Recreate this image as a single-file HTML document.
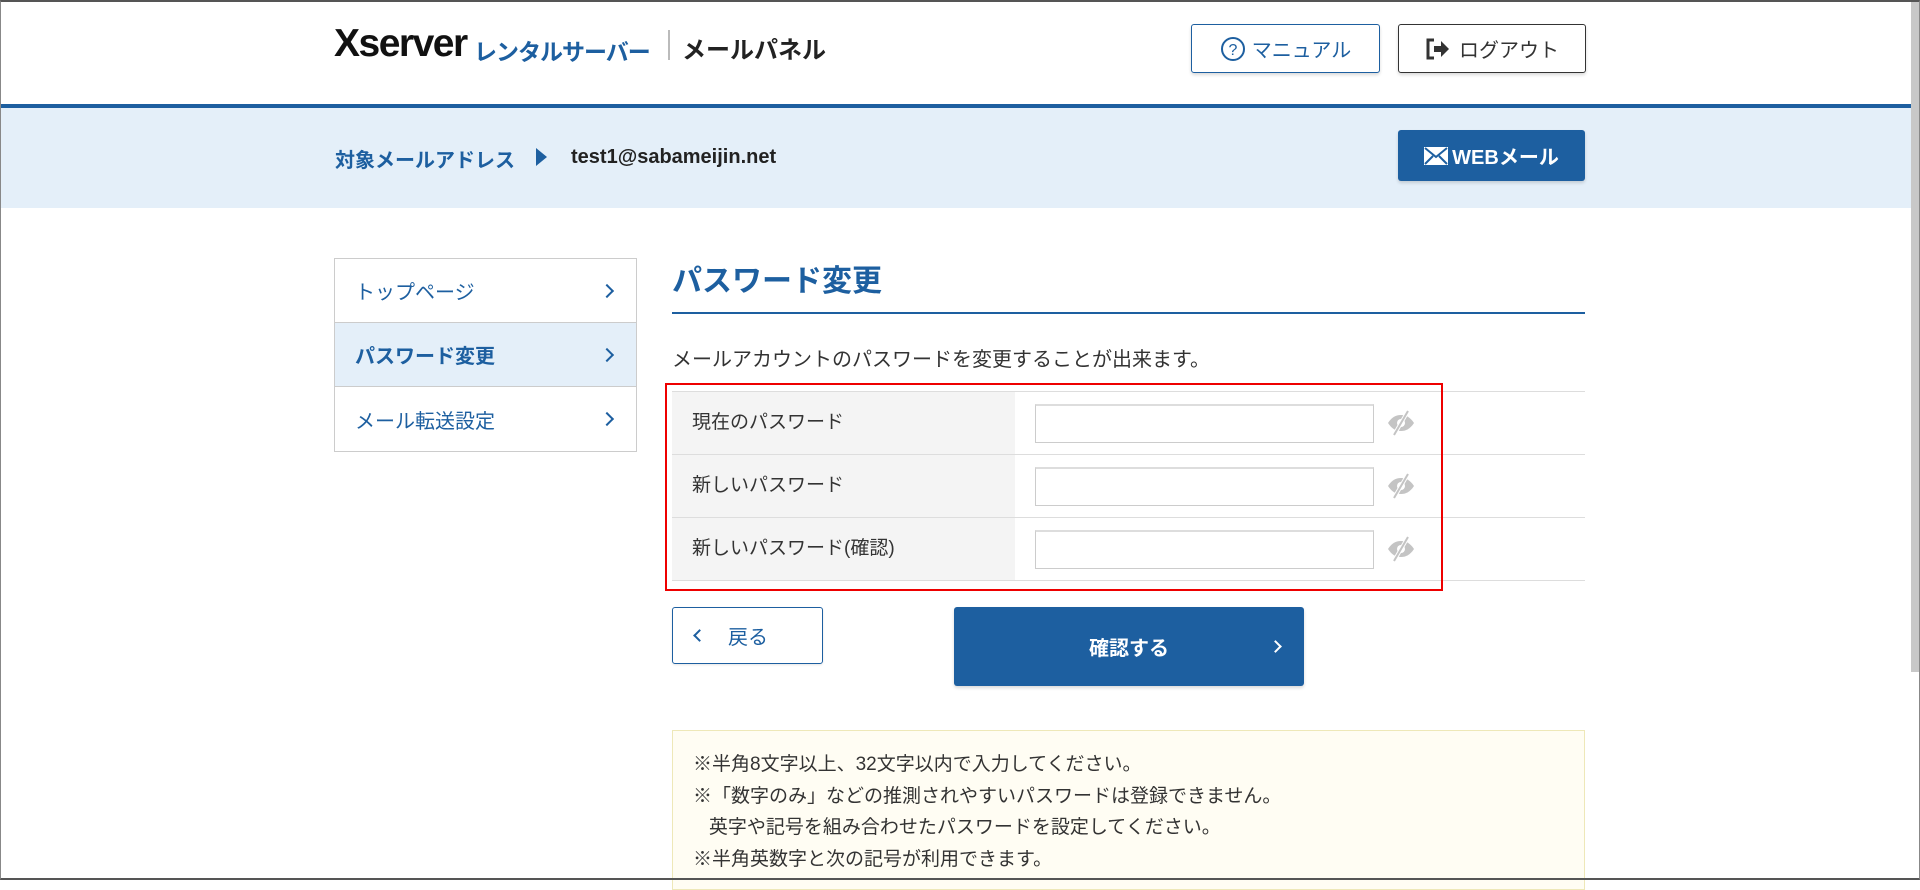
<!DOCTYPE html>
<html><head><meta charset="utf-8"><style>
*{box-sizing:border-box;margin:0;padding:0}
body{width:1920px;height:880px;overflow:hidden;background:#fff;font-family:"Liberation Sans","Noto Sans CJK JP",sans-serif;color:#333;position:relative}
.abs{position:absolute}
.frame{position:absolute;left:0;top:0;width:1920px;height:880px;border:1px solid #888;border-top:2px solid #555;border-bottom:2px solid #555;pointer-events:none;z-index:10}
.scroll{position:absolute;right:1px;top:2px;width:8px;height:670px;background:#c8c8c8;z-index:9}
.btn{position:absolute;border-radius:3px;display:flex;align-items:center;justify-content:center;font-size:20px;box-shadow:0 2px 3px rgba(0,0,0,.15)}
.nav{position:absolute;left:334px;top:258px;width:303px;border:1px solid #ccc}
.nav div{height:64px;border-bottom:1px solid #ccc;display:flex;align-items:center;padding-left:20px;font-size:20px;color:#1d5fa0;position:relative}
.nav div:last-child{border-bottom:none}
.nav div::after{content:"";position:absolute;right:24px;top:27px;width:8px;height:8px;border-top:2px solid #1d5fa0;border-right:2px solid #1d5fa0;transform:rotate(45deg)}
.row{position:absolute;left:672px;width:913px;height:63px;border-bottom:1px solid #ddd}
.row .lab{position:absolute;left:0;top:0;width:343px;height:62px;background:#f4f4f4;font-size:19px;padding-left:20px;line-height:62px;color:#333}
.row .inp{position:absolute;left:363px;top:12px;width:339px;height:39px;border:1px solid #ccc;border-top:2px solid #ddd;background:#fff}
.row svg{position:absolute;left:714px;top:16px}
.note{position:absolute;left:672px;top:730px;width:913px;height:160px;background:#fffdf3;border:1px solid #eee8b8;font-size:19px;color:#333;padding:18px 0 0 20px;line-height:31.5px}
</style></head><body>
<div class="frame"></div><div class="scroll"></div>
<div class="abs" style="left:334px;top:22px;font-size:39px;font-weight:bold;letter-spacing:-1.5px;color:#111">Xserver</div>
<div class="abs" style="left:474px;top:33px;font-size:23px;font-weight:bold;color:#1d5fa0;letter-spacing:-1px">レンタルサーバー</div>
<div class="abs" style="left:668px;top:30px;width:2px;height:30px;background:#bbb"></div>
<div class="abs" style="left:682px;top:30px;font-size:24px;font-weight:bold;color:#222">メールパネル</div>
<div class="btn" style="left:1191px;top:24px;width:189px;height:49px;border:1px solid #1d5fa0;color:#1d5fa0"><svg width="26" height="26" viewBox="0 0 26 26" style="margin-right:6px"><circle cx="13" cy="13" r="11" fill="none" stroke="#1d5fa0" stroke-width="2"/><text x="13" y="19" font-size="16" text-anchor="middle" fill="#1d5fa0" font-family="Liberation Sans">?</text></svg>マニュアル</div>
<div class="btn" style="left:1398px;top:24px;width:188px;height:49px;border:1px solid #333;color:#333"><svg width="26" height="24" viewBox="0 0 26 24" style="margin-right:8px"><path d="M9 3H3v18h6" fill="none" stroke="#333" stroke-width="3"/><path d="M9 9h7V4l8 8-8 8v-5H9z" fill="#333"/></svg>ログアウト</div>
<div class="abs" style="left:0;top:104px;width:1920px;height:4px;background:#1d5fa0"></div>
<div class="abs" style="left:0;top:108px;width:1920px;height:100px;background:#e4eff9"></div>
<div class="abs" style="left:335px;top:144px;font-size:20px;font-weight:bold;color:#1d5fa0">対象メールアドレス</div>
<div class="abs" style="left:536px;top:148px;width:0;height:0;border-left:11px solid #1d5fa0;border-top:9px solid transparent;border-bottom:9px solid transparent"></div>
<div class="abs" style="left:571px;top:146px;font-size:20px;font-weight:bold;color:#222">test1@sabameijin.net</div>
<div class="btn" style="left:1398px;top:130px;width:187px;height:51px;background:#1d5fa0;color:#fff;font-weight:bold"><svg width="24" height="18" viewBox="0 0 24 18" style="margin-right:4px"><rect x="0" y="0" width="24" height="18" fill="#fff"/><path d="M1 1l11 9 11-9M1 17l8-8M23 17l-8-8" stroke="#1d5fa0" stroke-width="2" fill="none"/></svg>WEBメール</div>
<div class="nav"><div>トップページ</div><div style="background:#e4eff9;font-weight:bold">パスワード変更</div><div>メール転送設定</div></div>
<div class="abs" style="left:672px;top:256px;font-size:30px;font-weight:bold;color:#1d5fa0">パスワード変更</div>
<div class="abs" style="left:672px;top:312px;width:913px;height:2px;background:#1d5fa0"></div>
<div class="abs" style="left:672px;top:343px;font-size:20px;color:#333">メールアカウントのパスワードを変更することが出来ます。</div>
<div class="abs" style="left:672px;top:391px;width:913px;height:1px;background:#ddd"></div>
<div class="row" style="top:392px"><div class="lab">現在のパスワード</div><div class="inp"></div><svg width="30" height="30" viewBox="0 0 30 30"><path d="M2 15c4-6 8-8 13-8s9 2 13 8c-4 6-8 8-13 8S6 21 2 15z" fill="#c4c4c4"/><circle cx="15" cy="15" r="4" fill="#fff"/><path d="M22 3L8 27" stroke="#fff" stroke-width="4"/><path d="M22 3L8 27" stroke="#c4c4c4" stroke-width="2"/></svg></div>
<div class="row" style="top:455px"><div class="lab">新しいパスワード</div><div class="inp"></div><svg width="30" height="30" viewBox="0 0 30 30"><path d="M2 15c4-6 8-8 13-8s9 2 13 8c-4 6-8 8-13 8S6 21 2 15z" fill="#c4c4c4"/><circle cx="15" cy="15" r="4" fill="#fff"/><path d="M22 3L8 27" stroke="#fff" stroke-width="4"/><path d="M22 3L8 27" stroke="#c4c4c4" stroke-width="2"/></svg></div>
<div class="row" style="top:518px"><div class="lab">新しいパスワード(確認)</div><div class="inp"></div><svg width="30" height="30" viewBox="0 0 30 30"><path d="M2 15c4-6 8-8 13-8s9 2 13 8c-4 6-8 8-13 8S6 21 2 15z" fill="#c4c4c4"/><circle cx="15" cy="15" r="4" fill="#fff"/><path d="M22 3L8 27" stroke="#fff" stroke-width="4"/><path d="M22 3L8 27" stroke="#c4c4c4" stroke-width="2"/></svg></div>
<div class="abs" style="left:665px;top:383px;width:778px;height:208px;border:2px solid #e00"></div>
<div class="btn" style="left:672px;top:607px;width:151px;height:57px;border:1px solid #1d5fa0;color:#1d5fa0;justify-content:flex-start;padding-left:22px;box-shadow:0 1px 2px rgba(0,0,0,.1)"><span style="display:inline-block;width:9px;height:9px;border-left:2px solid #1d5fa0;border-bottom:2px solid #1d5fa0;transform:rotate(45deg);margin-right:24px"></span>戻る</div>
<div class="btn" style="left:954px;top:607px;width:350px;height:79px;background:#1d5fa0;color:#fff;font-weight:bold">確認する<span style="position:absolute;right:24px;top:35px;width:9px;height:9px;border-top:2px solid #fff;border-right:2px solid #fff;transform:rotate(45deg)"></span></div>
<div class="note">※半角8文字以上、32文字以内で入力してください。<br>※「数字のみ」などの推測されやすいパスワードは登録できません。<br>&nbsp;&nbsp;&nbsp;英字や記号を組み合わせたパスワードを設定してください。<br>※半角英数字と次の記号が利用できます。</div>
</body></html>
